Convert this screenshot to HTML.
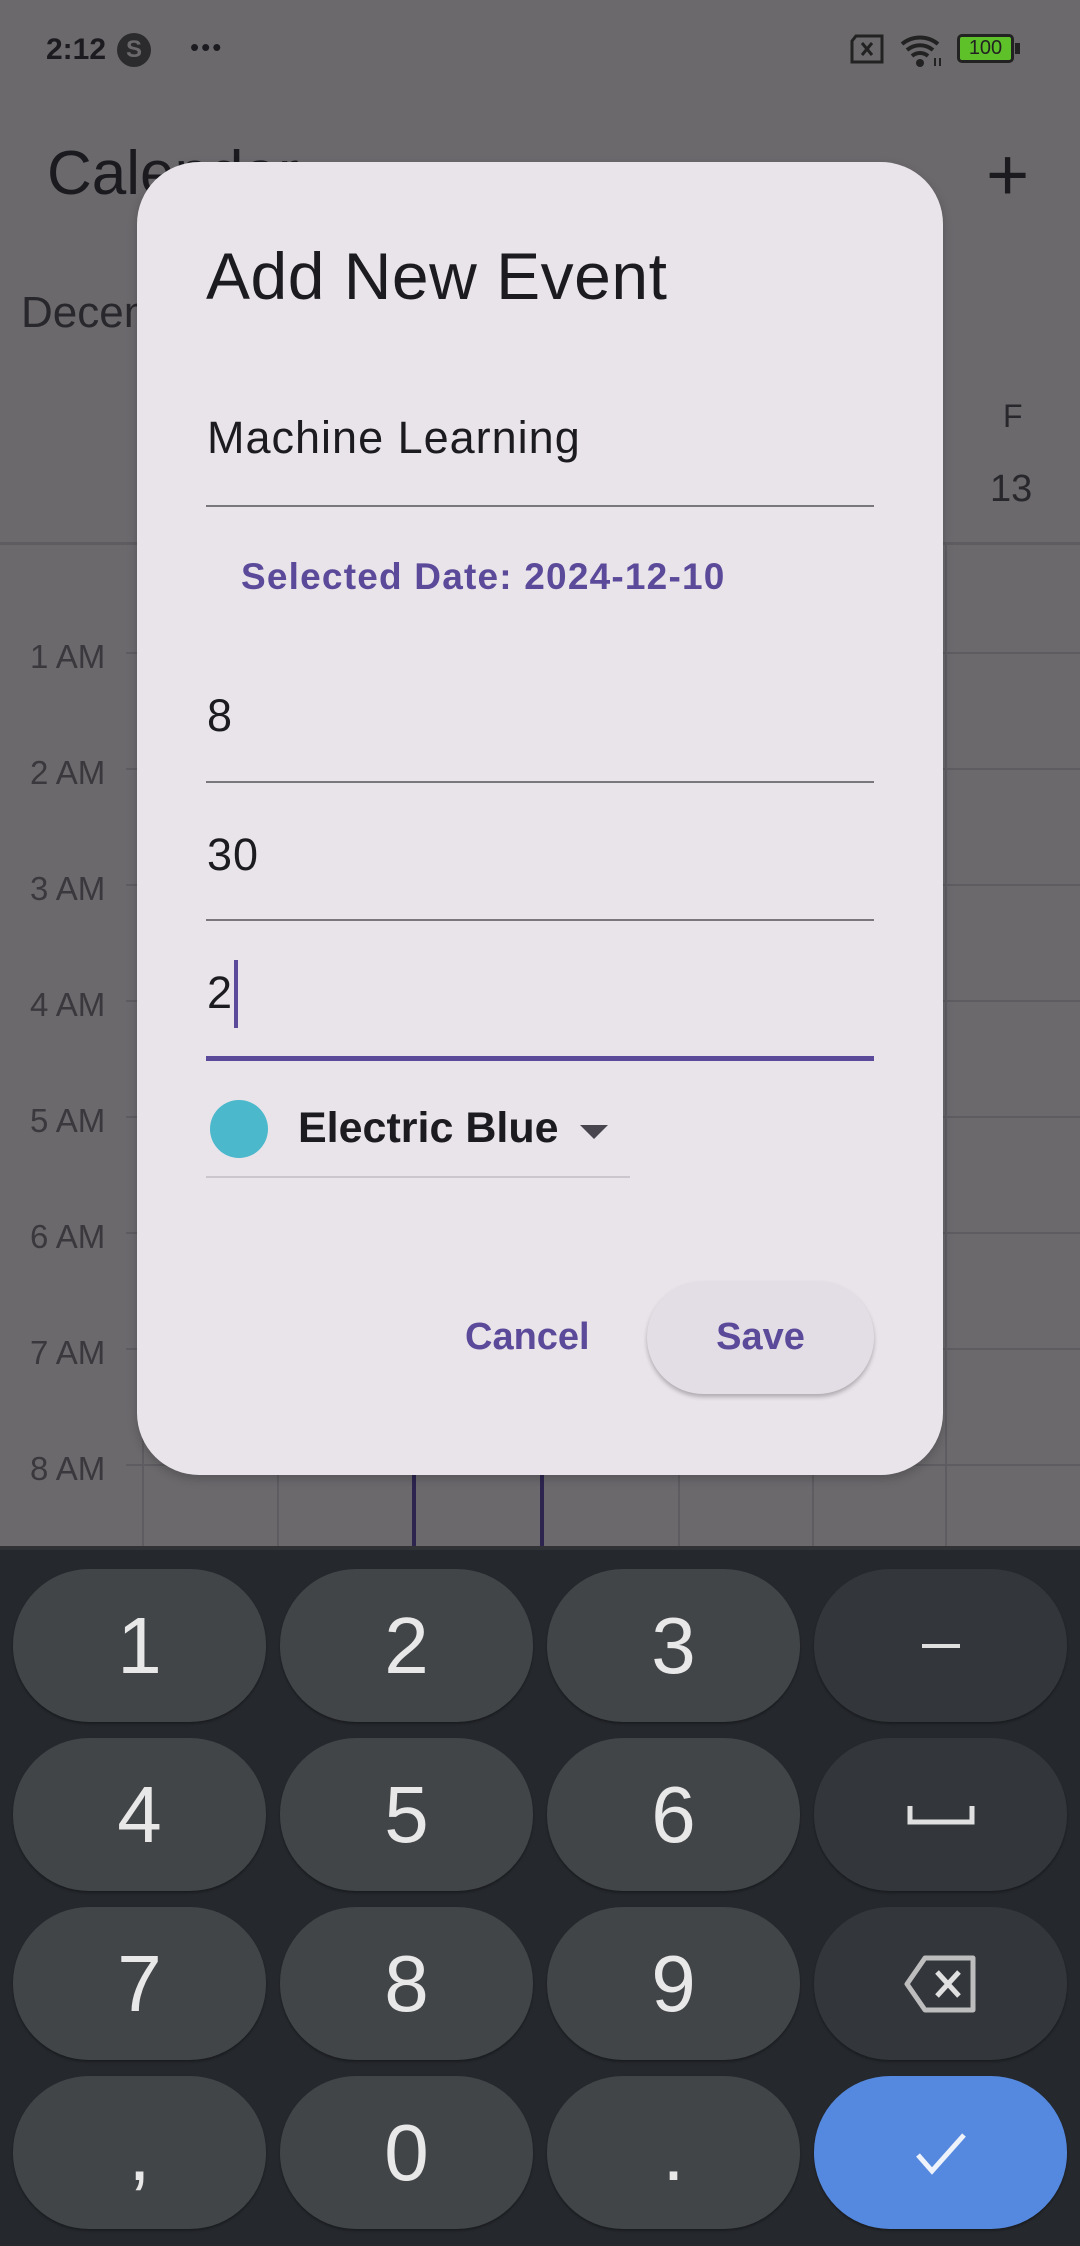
<!DOCTYPE html>
<html><head><meta charset="utf-8"><style>
*{margin:0;padding:0;box-sizing:border-box}
body{width:1080px;height:2246px;position:relative;overflow:hidden;background:#6b696c;font-family:"Liberation Sans",sans-serif}
.a{position:absolute}
.hl{position:absolute;left:126px;right:0;height:2px;background:#5e5c60}
.vl{position:absolute;width:2px;top:543px;height:1004px;background:#5e5c60}
.hr{position:absolute;left:30px;font-size:33px;color:#3a383c}
.k{position:absolute;width:253px;height:153px;border-radius:76px/76px;background:#424548;color:#e8e8e8;font-size:80px;font-weight:300;display:flex;align-items:center;justify-content:center;box-shadow:0 2px 2px rgba(0,0,0,.3)}
.k.d{background:#33363a}
.fld{position:absolute;left:206px;width:668px;height:2px;background:#7a777c}
.ft{position:absolute;left:207px;font-size:45px;color:#1c1b1f;letter-spacing:1px}
</style></head><body>
<!-- status bar -->
<div class="a" style="left:46px;top:33px;font-size:30px;font-weight:bold;color:#1c1b1f">2:12</div>
<div class="a" style="left:117px;top:33px;width:34px;height:34px;border-radius:50%;background:#2b2a2d;color:#6b696c;font-size:24px;font-weight:bold;text-align:center;line-height:34px">S</div>
<div class="a" style="left:190px;top:32px;font-size:26px;color:#1c1b1f;letter-spacing:2px">•••</div>
<svg class="a" style="left:850px;top:34px" width="36" height="30" viewBox="0 0 36 30"><path d="M6 2h26v26H2V7z" fill="none" stroke="#222" stroke-width="3"/><path d="M12 9l10 12M22 9L12 21" stroke="#222" stroke-width="3"/></svg>
<svg class="a" style="left:900px;top:32px" width="44" height="36" viewBox="0 0 44 36"><path d="M2 12a28 28 0 0 1 36 0M7 18a20 20 0 0 1 26 0M12 24a12 12 0 0 1 16 0" fill="none" stroke="#222" stroke-width="4"/><circle cx="20" cy="31" r="4" fill="#222"/><path d="M35 26v8M40 26v8" stroke="#222" stroke-width="2"/></svg>
<div class="a" style="left:957px;top:34px;width:57px;height:29px;border:3px solid #222;border-radius:5px;background:#5ec12a;font-size:20px;line-height:23px;text-align:center;color:#222">100</div>
<div class="a" style="left:1015px;top:43px;width:5px;height:11px;background:#222"></div>
<!-- app bar -->
<div class="a" style="left:47px;top:138px;font-size:62px;color:#1b1b1f">Calendar</div>
<div class="a" style="left:986px;top:132px;font-size:74px;color:#1b1b1f;font-weight:300">+</div>
<div class="a" style="left:21px;top:288px;font-size:44px;color:#28272b">December</div>
<div class="a" style="left:1003px;top:398px;font-size:32px;color:#28272b">F</div>
<div class="a" style="left:990px;top:468px;font-size:38px;color:#28272b">13</div>
<div class="a" style="left:0;right:0;top:542px;height:3px;background:#5e5c60"></div>
<!-- grid -->
<div class="hl" style="top:652px"></div><div class="hl" style="top:768px"></div><div class="hl" style="top:884px"></div><div class="hl" style="top:1000px"></div><div class="hl" style="top:1116px"></div><div class="hl" style="top:1232px"></div><div class="hl" style="top:1348px"></div><div class="hl" style="top:1464px"></div>
<div class="vl" style="left:142px"></div><div class="vl" style="left:277px"></div><div class="vl" style="left:412px;width:4px;background:#2d2550"></div><div class="vl" style="left:540px;width:4px;background:#2d2550"></div><div class="vl" style="left:678px"></div><div class="vl" style="left:812px"></div><div class="vl" style="left:945px"></div>
<div class="hr" style="top:638px">1 AM</div><div class="hr" style="top:754px">2 AM</div><div class="hr" style="top:870px">3 AM</div><div class="hr" style="top:986px">4 AM</div><div class="hr" style="top:1102px">5 AM</div><div class="hr" style="top:1218px">6 AM</div><div class="hr" style="top:1334px">7 AM</div><div class="hr" style="top:1450px">8 AM</div>
<!-- dialog -->
<div class="a" style="left:137px;top:162px;width:806px;height:1313px;border-radius:62px;background:#e9e4ea;box-shadow:0 4px 10px rgba(0,0,0,.2)"></div>
<div class="a" style="left:206px;top:238px;font-size:66px;color:#1c1b1f;letter-spacing:0.5px">Add New Event</div>
<div class="ft" style="top:412px">Machine Learning</div>
<div class="fld" style="top:505px"></div>
<div class="a" style="left:241px;top:556px;font-size:37px;font-weight:bold;color:#5b4a9a;letter-spacing:1.2px">Selected Date: 2024-12-10</div>
<div class="ft" style="top:690px">8</div>
<div class="fld" style="top:781px"></div>
<div class="ft" style="top:829px">30</div>
<div class="fld" style="top:919px"></div>
<div class="ft" style="top:967px">2</div>
<div class="a" style="left:234px;top:960px;width:4px;height:68px;background:#5b4a9a"></div>
<div class="a" style="left:206px;top:1056px;width:668px;height:5px;background:#5b4a9a"></div>
<div class="a" style="left:210px;top:1100px;width:58px;height:58px;border-radius:50%;background:#4bb8cc"></div>
<div class="a" style="left:298px;top:1104px;font-size:43px;font-weight:bold;color:#1c1b1f">Electric Blue</div>
<div class="a" style="left:580px;top:1125px;width:0;height:0;border-left:14px solid transparent;border-right:14px solid transparent;border-top:14px solid #49454f"></div>
<div class="a" style="left:206px;top:1176px;width:424px;height:2px;background:#cbc6ce"></div>
<div class="a" style="left:465px;top:1316px;font-size:38px;font-weight:bold;color:#5b4a9a">Cancel</div>
<div class="a" style="left:647px;top:1281px;width:227px;height:113px;border-radius:57px;background:#e3dee6;box-shadow:0 3px 4px rgba(0,0,0,.25)"></div>
<div class="a" style="left:647px;top:1316px;width:227px;text-align:center;font-size:38px;font-weight:bold;color:#5b4a9a">Save</div>
<!-- keyboard -->
<div class="a" style="left:0;top:1546px;width:1080px;height:700px;background:#25282d"></div>
<div class="a" style="left:0;top:1546px;width:1080px;height:4px;background:#303236"></div>
<div class="k" style="left:13px;top:1569px">1</div><div class="k" style="left:280px;top:1569px">2</div><div class="k" style="left:547px;top:1569px">3</div><div class="k d" style="left:814px;top:1569px"><div style="width:38px;height:4px;background:#e0e0e0"></div></div>
<div class="k" style="left:13px;top:1738px">4</div><div class="k" style="left:280px;top:1738px">5</div><div class="k" style="left:547px;top:1738px">6</div>
<div class="k d" style="left:814px;top:1738px"><svg width="70" height="30" viewBox="0 0 70 30"><path d="M4 6v16h62V6" fill="none" stroke="#e0e0e0" stroke-width="5"/></svg></div>
<div class="k" style="left:13px;top:1907px">7</div><div class="k" style="left:280px;top:1907px">8</div><div class="k" style="left:547px;top:1907px">9</div>
<div class="k d" style="left:814px;top:1907px"><svg width="76" height="60" viewBox="0 0 76 60"><path d="M22 4h48v52H22L4 30z" fill="none" stroke="#bdbdbd" stroke-width="5" stroke-linejoin="round"/><path d="M34 18l22 24M56 18L34 42" stroke="#e0e0e0" stroke-width="5"/></svg></div>
<div class="k" style="left:13px;top:2076px">,</div><div class="k" style="left:280px;top:2076px">0</div><div class="k" style="left:547px;top:2076px">.</div>
<div class="k" style="left:814px;top:2076px;background:#5589e0"><svg width="54" height="44" viewBox="0 0 54 44"><path d="M4 24l14 16L50 4" fill="none" stroke="#eef2fa" stroke-width="5"/></svg></div>
</body></html>
